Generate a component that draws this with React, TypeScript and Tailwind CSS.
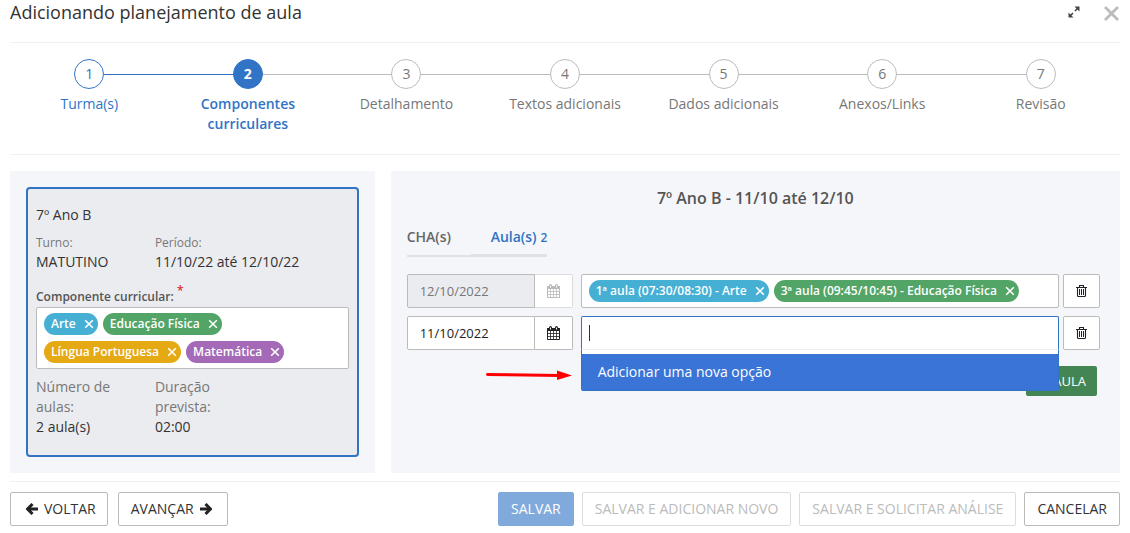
import React from "react";
import { clsx } from "clsx";

const STEPS = [
  "Turma(s)",
  "Componentes curriculares",
  "Detalhamento",
  "Textos adicionais",
  "Dados adicionais",
  "Anexos/Links",
  "Revisão",
];
const CURRENT = 1;

function ExpandIcon() {
  return (
    <svg width="12" height="12" viewBox="0 0 12 12" fill="#444" stroke="#444">
      <path d="M6.5 0.5h5v5zM0.5 6.5v5h5z" stroke="none" />
      <path d="M10 2 7 5M5 7 2 10" strokeWidth="1.6" />
    </svg>
  );
}

function CalendarIcon() {
  return (
    <svg width="13" height="14" viewBox="0 0 13 14" fill="none" stroke="currentColor">
      <path d="M0.5 2.5h12v11h-12z" />
      <path d="M0 3.5h13" strokeWidth="3" />
      <path d="M3.5 1.5v2M9.5 1.5v2" strokeWidth="3" strokeLinecap="round" />
      <path d="M3.5 1.500v2M9.500 1.500v2" stroke="white" strokeWidth="1" />
      <path d="M3.5 5v8.500M6.500 5v8.500M9.500 5v8.500M0.500 7.500h12M0.500 10.500h12" strokeWidth="0.8" />
    </svg>
  );
}

function TrashIcon() {
  return (
    <svg width="11" height="12" viewBox="0 0 11 12" fill="none" stroke="currentColor">
      <path d="M0 2.500h11M3.500 2.500v-2h4v2M1.500 2.500v8q0 1 1 1h6q1 0 1-1v-8" strokeWidth="1.1" />
      <path d="M3.500 4v6M5.500 4v6M7.500 4v6" strokeWidth="1" />
    </svg>
  );
}

function ArrowIcon({ className }: { className?: string }) {
  return (
    <svg className={className} width="12" height="12" viewBox="0 0 12 12" fill="none" stroke="#222" strokeWidth="3">
      <path d="M0.500 6h9.500" strokeLinecap="round" />
      <path d="M5.500 1 10.300 6 5.500 11" />
    </svg>
  );
}

function Tag({ color, children }: { color: string; children: React.ReactNode }) {
  return (
    <span className={clsx("flex h-[22px] items-center gap-2 rounded-full pl-[7px] pr-1 text-xs font-semibold text-white", color)}>
      {children}
      <button type="button" aria-label="Remover" className="flex">
        <svg width="10" height="10" viewBox="0 0 10 10" stroke="currentColor" strokeWidth="1.600">
          <path d="M1.200 1.200 8.800 8.800M8.800 1.200 1.200 8.800" />
        </svg>
      </button>
    </span>
  );
}

function DateField({ id, value, disabled }: { id: string; value: string; disabled?: boolean }) {
  return (
    <div className="flex h-[34px] w-[166px] shrink-0">
      <input
        id={id}
        aria-label="Data da aula"
        defaultValue={value}
        disabled={disabled}
        className="min-w-0 flex-1 rounded-l-xs border border-[#bbb] bg-white px-3 text-[13px] text-[#222] disabled:bg-[#ebecf0] disabled:text-[#777]"
      />
      <button
        type="button"
        aria-label="Abrir calendário"
        disabled={disabled}
        className="flex w-[38px] items-center justify-center rounded-r-xs border border-l-0 border-[#bbb] bg-white text-[#222] disabled:border-[#ddd] disabled:text-[#bbb]"
      >
        <CalendarIcon />
      </button>
    </div>
  );
}

function TrashButton() {
  return (
    <button
      type="button"
      aria-label="Excluir aula"
      className="flex h-[34px] w-[37px] shrink-0 items-center justify-center rounded-xs border border-[#bbb] bg-white text-[#222]"
    >
      <TrashIcon />
    </button>
  );
}

function FooterButton({ className, disabled, children }: { className?: string; disabled?: boolean; children: React.ReactNode }) {
  return (
    <button
      type="button"
      disabled={disabled}
      className={clsx("flex h-[34px] items-center gap-[6px] rounded-xs border whitespace-nowrap", className)}
    >
      {children}
    </button>
  );
}

function Stepper() {
  return (
    <ol className="flex h-[113px] border-y border-[#f0f0f0] pt-4">
      {STEPS.map((label, i) => (
        <li
          key={label}
          className={clsx(
            "flex flex-1 flex-col items-center text-center",
            i <= CURRENT ? "text-[#3174c5]" : "text-[#777]",
            i === CURRENT && "font-semibold"
          )}
        >
          <div className="flex w-full items-center">
            <span className={clsx("h-px flex-1", i > 0 && (i <= CURRENT ? "bg-[#3174c5]" : "bg-[#bbb]"))} />
            <span
              className={clsx(
                "flex size-[30px] items-center justify-center rounded-full border",
                i > CURRENT && "border-[#bbb]",
                i < CURRENT && "border-[#3174c5]",
                i === CURRENT && "border-[#3174c5] bg-[#3174c5] font-bold text-white"
              )}
            >
              {i + 1}
            </span>
            <span className={clsx("h-px flex-1", i < STEPS.length - 1 && (i < CURRENT ? "bg-[#3174c5]" : "bg-[#bbb]"))} />
          </div>
          <span className="mt-[5px] px-4">{label}</span>
        </li>
      ))}
    </ol>
  );
}

function ClassCard() {
  return (
    <section className="bg-[#f5f6fa] p-4">
      <div className="h-[270px] overflow-hidden rounded-sm border-2 border-[#3174c5] bg-[#ebecf0] px-2 pt-4">
        <p>7º Ano B</p>
        <dl className="-mr-11 mt-2 grid grid-cols-3">
          <div>
            <dt className="text-xs leading-[19px] text-[#777]">Turno:</dt>
            <dd>MATUTINO</dd>
          </div>
          <div className="col-span-2">
            <dt className="text-xs leading-[19px] text-[#777]">Período:</dt>
            <dd>11/10/22 até 12/10/22</dd>
          </div>
        </dl>
        <label htmlFor="componente" className="mt-[15px] block text-xs leading-5 font-semibold text-[#555]">
          Componente curricular: <sup className="text-xs text-[#d9302c]">*</sup>
        </label>
        <div className="flex flex-wrap gap-x-[5px] gap-y-[6px] rounded-xs border border-[#bbb] bg-white px-[7px] py-[5px]">
          <Tag color="bg-[#46afd4]">Arte</Tag>
          <Tag color="bg-[#52a567]">Educação Física</Tag>
          <Tag color="bg-[#e5a913]">Língua Portuguesa</Tag>
          <Tag color="bg-[#a469b7]">Matemática</Tag>
          <input id="componente" className="w-5 min-w-0 flex-1 outline-none" />
        </div>
        <dl className="-mr-11 mt-2 grid grid-cols-3">
          <div>
            <dt className="pr-10 text-[#777]">Número de aulas:</dt>
            <dd>2 aula(s)</dd>
          </div>
          <div>
            <dt className="pr-10 text-[#777]">Duração prevista:</dt>
            <dd>02:00</dd>
          </div>
        </dl>
      </div>
    </section>
  );
}

function LessonsPanel() {
  return (
    <section className="bg-[#f5f6fa] px-4 pt-4">
      <h2 className="text-center text-base leading-[22px] font-semibold text-[#555]">7º Ano B - 11/10 até 12/10</h2>
      <div role="tablist" className="mt-4 flex font-semibold">
        <button type="button" role="tab" aria-selected="false" className="flex h-8 w-16 border-b-2 border-[#e0e1e5] pt-[2px] text-[#666]">
          CHA(s)
        </button>
        <button type="button" role="tab" aria-selected="true" className="flex h-8 items-baseline gap-1 border-b-3 border-[#e0e1e5] pt-[2px] pl-5 text-[#3174c5]">
          Aula(s) <span className="text-xs">2</span>
        </button>
      </div>

      <div className="mt-[17px] flex flex-col gap-2 pr-1">
        <div className="flex">
          <DateField id="data-1" value="12/10/2022" disabled />
          <div className="mr-1 ml-2 flex h-[34px] min-w-0 flex-1 items-center gap-[5px] rounded-xs border border-[#bbb] bg-white px-[7px]">
            <Tag color="bg-[#46afd4]">1ª aula (07:30/08:30) - Arte</Tag>
            <Tag color="bg-[#52a567]">3ª aula (09:45/10:45) - Educação Física</Tag>
          </div>
          <TrashButton />
        </div>

        <div className="relative flex">
          <DateField id="data-2" value="11/10/2022" />
          <div className="relative mr-1 ml-2 h-[34px] min-w-0 flex-1">
            <div className="flex h-full items-center rounded-t-xs border border-[#3174c5] border-b-[#eee] bg-white px-[7px]">
              <span className="h-4 w-px bg-[#333]" />
              <input aria-label="Aulas" className="min-w-0 flex-1 outline-none" />
            </div>
            {/* suggestions */}
            <ul role="listbox" className="absolute inset-x-0 top-full z-10 rounded-b-xs border border-t-0 border-[#3174c5] bg-white pt-1">
              <li role="option" aria-selected="true" className="bg-[#3974d6] px-4 py-2 text-white">
                Adicionar uma nova opção
              </li>
            </ul>
          </div>
          <TrashButton />
          <svg className="absolute top-[52px] left-[79px]" width="87" height="14" viewBox="0 0 87 14">
            <path d="M1.500 6.500 74 7.500" stroke="red" strokeWidth="3" strokeLinecap="round" />
            <path d="M71 2.500 86 7.500 71 12z" fill="red" />
          </svg>
        </div>
      </div>

      <div className="mt-4 flex justify-end pr-[7px]">
        <button type="button" className="h-[30px] w-[71px] rounded-xs bg-[#438654] pr-[11px] text-right text-[13px] text-white">
          + AULA
        </button>
      </div>
    </section>
  );
}

export default function App() {
  return (
    <div className="bg-white px-[10px] font-['Open_Sans',sans-serif] text-sm leading-5 text-[#333]">
      <header className="flex h-[42px] items-start justify-between">
        <h1 className="text-lg leading-6">Adicionando planejamento de aula</h1>
        <div className="flex gap-6 pt-[6px] pr-px">
          <button type="button" aria-label="Expandir" className="flex">
            <ExpandIcon />
          </button>
          <button type="button" aria-label="Fechar" className="flex">
            <svg width="15" height="15" viewBox="0 0 15 15" stroke="#bbb" strokeWidth="2.800">
              <path d="M1 1 14 14M14 1 1 14" />
            </svg>
          </button>
        </div>
      </header>

      <Stepper />

      <main className="mt-4 grid grid-cols-[1fr_2fr] gap-4">
        <ClassCard />
        <LessonsPanel />
      </main>

      <footer className="mt-2 flex justify-between border-t border-[#f0f0f0] pt-[10px]">
        <div className="flex gap-[10px]">
          <FooterButton className="border-[#bbb] pr-[11px] pl-[15px]">
            <ArrowIcon className="rotate-180" />
            VOLTAR
          </FooterButton>
          <FooterButton className="border-[#bbb] pr-[15px] pl-3">
            AVANÇAR
            <ArrowIcon />
          </FooterButton>
        </div>
        <div className="flex gap-2">
          <FooterButton disabled className="border-[#80a9dc] bg-[#80a9dc] px-3 font-medium text-white">SALVAR</FooterButton>
          <FooterButton disabled className="border-[#ddd] px-3 text-[#bbb]">SALVAR E ADICIONAR NOVO</FooterButton>
          <FooterButton disabled className="border-[#ddd] px-3 text-[#bbb]">SALVAR E SOLICITAR ANÁLISE</FooterButton>
          <FooterButton className="border-[#bbb] px-3">CANCELAR</FooterButton>
        </div>
      </footer>
    </div>
  );
}
